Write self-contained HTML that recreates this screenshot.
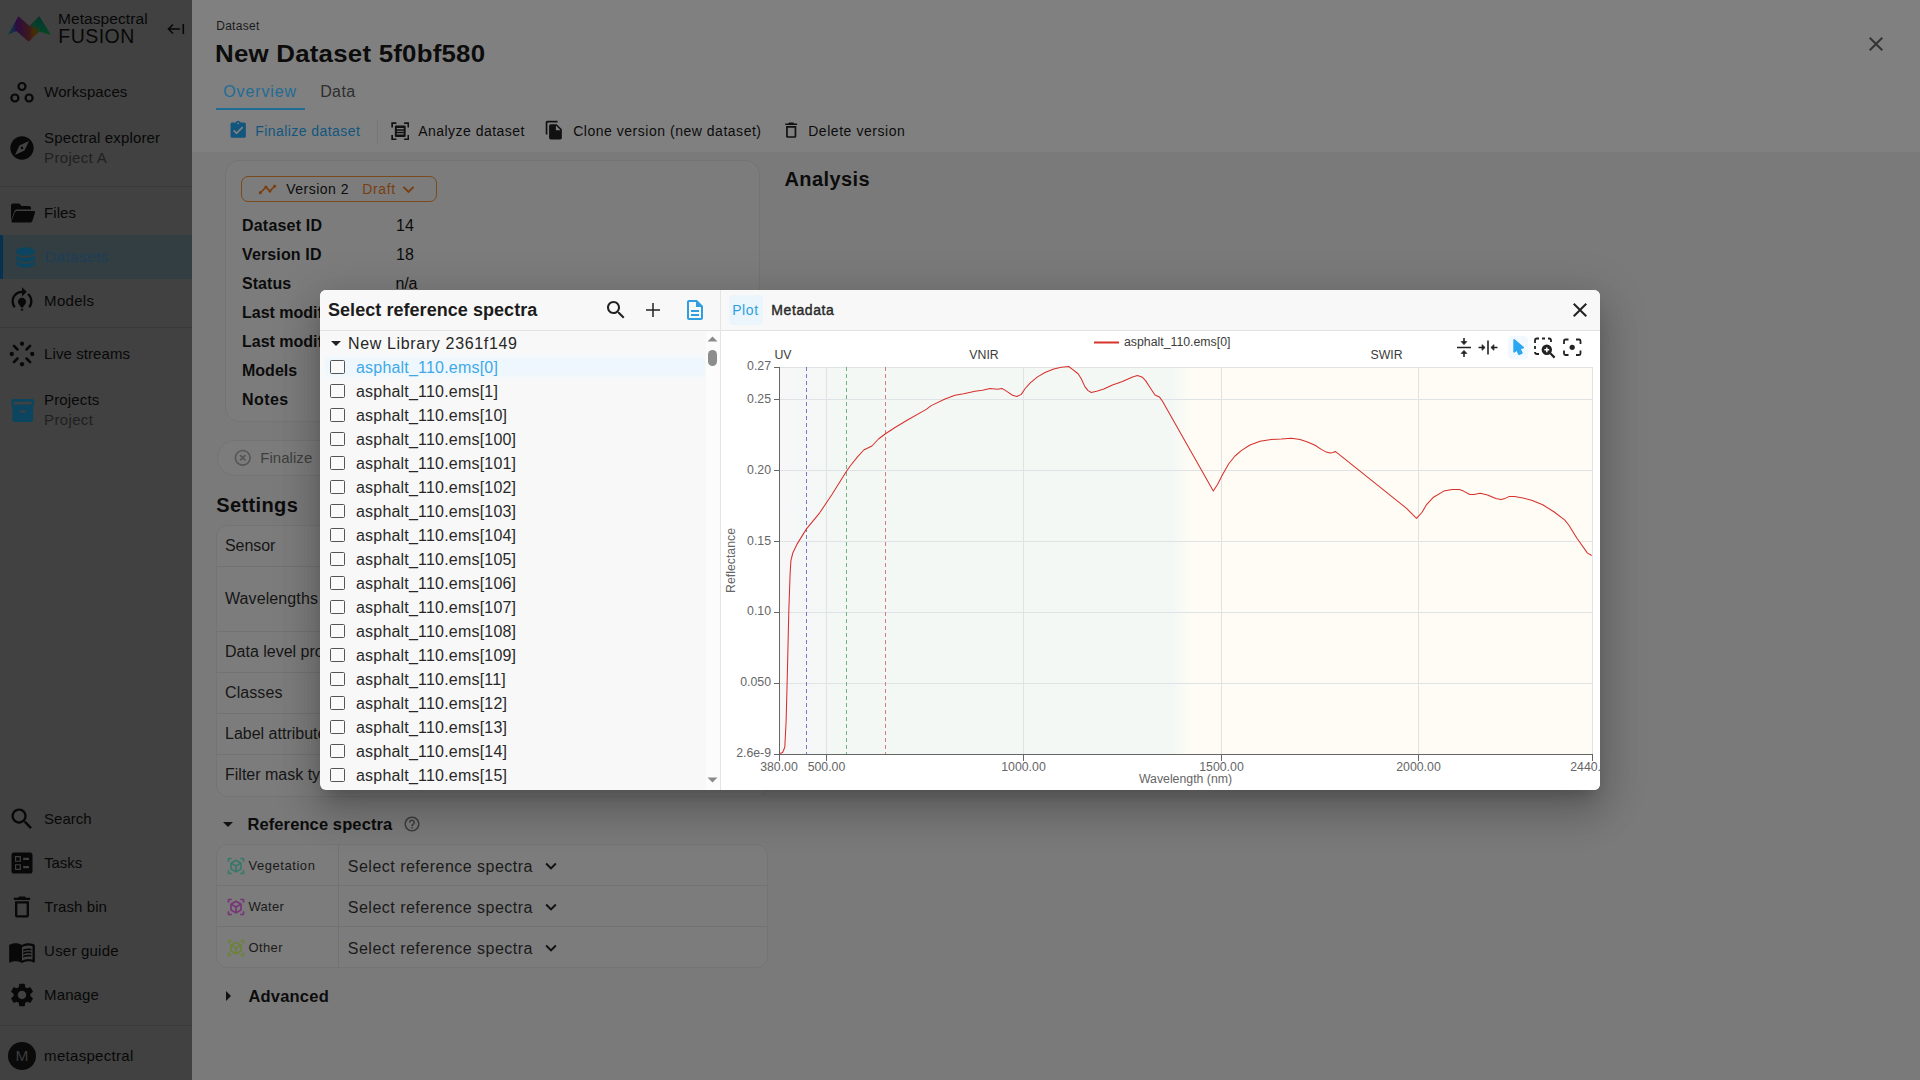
<!DOCTYPE html>
<html lang="en">
<head>
<meta charset="utf-8">
<title>Metaspectral Fusion - Dataset</title>
<style>
*{box-sizing:border-box;margin:0;padding:0}
html,body{width:1920px;height:1080px;overflow:hidden}
body{font-family:"Liberation Sans",sans-serif;background:#7a7a7a;color:#111;position:relative}
.abs{position:absolute}
svg{display:block}
.t{position:absolute;white-space:nowrap;line-height:1}
/* ---------- sidebar ---------- */
#side{position:absolute;left:0;top:0;width:192px;height:1080px;background:#414141}
#side .t{color:#080808;font-size:15px;letter-spacing:.35px}
#side .sub{color:#202020}
#side .hr{position:absolute;left:0;width:192px;height:1px;background:#393939}
#side svg{position:absolute}
/* ---------- main ---------- */
#hdr{position:absolute;left:192px;top:0;width:1728px;height:152px;background:#808080}
#main .t{color:#0c0c0c}
.card{position:absolute;background:#7c7c7c;border:1px solid #747474;border-radius:14px}
.row{position:absolute;left:0;width:100%;border-top:1px solid #757575}

/* ---------- modal ---------- */
#modal{position:absolute;left:320px;top:290px;width:1280px;height:500px;background:#f8f8f8;border-radius:6px;overflow:hidden;box-shadow:0 11px 15px -7px rgba(0,0,0,.2),0 24px 38px 3px rgba(0,0,0,.14),0 9px 46px 8px rgba(0,0,0,.12)}
#mhead{position:absolute;left:0;top:0;width:1280px;height:41px;background:#f8f8f8;border-bottom:1px solid #e2e2e2}
.li{position:absolute;left:5px;width:380px;height:24px}
.li.sel{background:linear-gradient(#f6f9fb,#eef7fd 22%,#eef7fd 78%,#f6f9fb)}
.li .cb{position:absolute;left:5.2px;top:5px;width:14.6px;height:14.2px;border:1.3px solid #555;border-radius:1.5px;background:#fafafa}
.li .lt{position:absolute;left:31px;top:5px;font-size:16px;line-height:1;letter-spacing:.2px;color:#282828;white-space:nowrap}
.li.sel .lt{color:#3fa9e6}
</style>
</head>
<body>

<!-- ================= SIDEBAR ================= -->
<div id="side">
  <!-- logo -->
  <svg style="left:4px;top:10px" width="52" height="36" viewBox="4 10 52 36">
    <defs>
      <linearGradient id="lg1" gradientUnits="userSpaceOnUse" x1="8" y1="0" x2="50.7" y2="0">
        <stop offset="0" stop-color="#0f3a40"/><stop offset=".12" stop-color="#132c4c"/><stop offset=".2" stop-color="#2b0d42"/>
        <stop offset=".36" stop-color="#35122e"/><stop offset=".5" stop-color="#3d1a1b"/><stop offset=".6" stop-color="#4b2a07"/>
        <stop offset=".68" stop-color="#34340a"/><stop offset=".78" stop-color="#0a4422"/><stop offset=".9" stop-color="#0a4a18"/><stop offset="1" stop-color="#0c4214"/>
      </linearGradient>
      <linearGradient id="lg2" gradientUnits="userSpaceOnUse" x1="39" y1="17" x2="34" y2="32">
        <stop offset="0" stop-color="#05352c"/><stop offset=".55" stop-color="#04402e" stop-opacity=".95"/><stop offset="1" stop-color="#04402e" stop-opacity="0"/>
      </linearGradient>
    </defs>
    <polygon points="8,34.700 18.300,16.200 29.700,26 39.300,16.200 50.700,34.700 39.300,31.500 28.700,41.700 16.300,31" fill="url(#lg1)"/>
    <polygon points="29.700,26 39.300,16.200 50.700,34.700 39.300,31.500" fill="url(#lg2)"/>
  </svg>
  <div class="t" style="left:58px;top:10.8px;font-size:15.5px;letter-spacing:.08px">Metaspectral</div>
  <div class="t" style="left:58.3px;top:27.2px;font-size:19.5px;letter-spacing:.45px">FUSION</div>
  <!-- collapse icon -->
  <svg style="left:167px;top:22px" width="18" height="14" viewBox="0 0 18 14" fill="none" stroke="#080808" stroke-width="1.6">
    <path d="M1.5 7H13M6 2.5L1.5 7 6 11.5M16.3 2v10"/>
  </svg>

  <!-- Workspaces -->
  <svg style="left:9px;top:80px" width="26" height="26" viewBox="0 0 26 26" fill="none" stroke="#080808" stroke-width="2.200">
    <circle cx="13" cy="6.500" r="3.500"/><circle cx="5.900" cy="18" r="3.500"/><circle cx="20.100" cy="18" r="3.500"/>
  </svg>
  <div class="t" style="left:44.2px;top:84px;letter-spacing:0.1px">Workspaces</div>

  <!-- Spectral explorer -->
  <svg style="left:8px;top:134px" width="28" height="28" viewBox="0 0 24 24" fill="#080808">
    <path d="M12 10.9c-.61 0-1.1.49-1.1 1.1s.49 1.1 1.1 1.1c.61 0 1.1-.49 1.1-1.1s-.49-1.1-1.1-1.1zM12 2C6.48 2 2 6.48 2 12s4.480 10 10 10 10-4.480 10-10S17.520 2 12 2zm2.190 12.190L6 18l3.810-8.190L18 6l-3.810 8.190z"/>
  </svg>
  <div class="t" style="left:44.1px;top:130px;letter-spacing:0.16px">Spectral explorer</div>
  <div class="t sub" style="left:44.1px;top:150px;letter-spacing:0.32px">Project A</div>
  <div class="hr" style="top:186px"></div>

  <!-- Files -->
  <svg style="left:9px;top:201px" width="27" height="24" viewBox="0 0 27 24" fill="#080808">
    <path d="M2 4.500C2 3.400 2.900 2.500 4 2.500h6.200l2.400 2.500H20c1.100 0 2 .900 2 2V8.500H7.600c-1 0-1.800.600-2.100 1.500L2 19.500z"/>
    <path d="M7.800 10h17.200c.700 0 1.200.700 1 1.400l-2.700 8.600c-.300.900-1.100 1.500-2 1.500H3.500c-.7 0-1.200-.7-1-1.400l3.300-8.700c.3-.8 1.100-1.400 2-1.400z"/>
  </svg>
  <div class="t" style="left:44.1px;top:204.7px;letter-spacing:0.04px">Files</div>

  <!-- Datasets (active) -->
  <div class="abs" style="left:0;top:235px;width:192px;height:44px;background:#323e41"></div>
  <div class="abs" style="left:0;top:235px;width:3px;height:44px;background:#063251"></div>
  <svg style="left:12px;top:244.500px" width="27" height="25" viewBox="0 0 24 24" preserveAspectRatio="none" fill="#0b4560">
    <ellipse cx="12" cy="6.200" rx="8.500" ry="4"/>
    <path d="M3.500 9.400c1.300 2 4.600 3.100 8.500 3.100s7.200-1.100 8.500-3.100v2.800c0 2.200-3.800 4-8.500 4s-8.500-1.800-8.500-4z"/>
    <path d="M3.500 15c1.300 2 4.600 3.100 8.500 3.100s7.200-1.100 8.500-3.100v2.800c0 2.200-3.800 4-8.500 4s-8.500-1.800-8.500-4z"/>
  </svg>
  <div class="t" style="left:45px;top:249px;color:#1b3e5a;letter-spacing:0.56px">Datasets</div>

  <!-- Models -->
  <svg style="left:8px;top:286px" width="28" height="28" viewBox="0 0 24 24" fill="#080808">
    <path d="M15.500 13.500c0 2-2.500 3.500-2.500 5h-2c0-1.500-2.500-3-2.500-5 0-1.930 1.570-3.500 3.500-3.500s3.500 1.570 3.500 3.500zm-2.500 6h-2V21h2v-1.500zm6-6.500c0 1.680-.590 3.210-1.580 4.420l1.420 1.420C20.180 17.270 21 15.230 21 13c0-2.740-1.230-5.190-3.160-6.840l-1.420 1.420C17.990 8.860 19 10.820 19 13zm-3-8l-4-4v3c-4.970 0-9 4.030-9 9 0 2.230.820 4.270 2.160 5.840l1.420-1.420C5.590 16.210 5 14.680 5 13c0-3.860 3.140-7 7-7v3l4-4z"/>
  </svg>
  <div class="t" style="left:44.1px;top:293px;letter-spacing:0.3px">Models</div>
  <div class="hr" style="top:327px"></div>

  <!-- Live streams -->
  <svg style="left:8px;top:340px" width="28" height="28" viewBox="0 0 26 26" fill="#080808" stroke="#080808" stroke-width="2.400" stroke-linecap="round">
    <circle cx="13" cy="3.500" r="2" stroke="none"/><circle cx="13" cy="22.500" r="2" stroke="none"/>
    <circle cx="3.500" cy="13" r="2" stroke="none"/><circle cx="22.500" cy="13" r="2" stroke="none"/>
    <path d="M5.500 5.500l3.300 3.300M20.500 5.500l-3.300 3.300M5.500 20.500l3.300-3.300M20.500 20.500l-3.300-3.300"/>
  </svg>
  <div class="t" style="left:44.1px;top:346px;letter-spacing:0.08px">Live streams</div>

  <!-- Projects -->
  <svg style="left:9.500px;top:396.500px" width="25.500" height="27" viewBox="0 0 24 26" fill="#0b4560">
    <path d="M3 2h18c1.100 0 2 .900 2 2v3.500c0 .700-.400 1.300-1 1.700V22c0 1.100-.900 2-2 2H4c-1.100 0-2-.900-2-2V9.200c-.600-.400-1-1-1-1.700V4c0-1.100.900-2 2-2zm.500 2.500v2.700h17V4.500zM9 13v2h6v-2z"/>
  </svg>
  <div class="t" style="left:44.1px;top:392px;letter-spacing:0.14px">Projects</div>
  <div class="t sub" style="left:44.1px;top:412px;letter-spacing:0.35px">Project</div>

  <!-- Search -->
  <svg style="left:8px;top:805px" width="28" height="28" viewBox="0 0 24 24" fill="#080808">
    <path d="M15.500 14h-.790l-.280-.270C15.410 12.590 16 11.110 16 9.500 16 5.910 13.090 3 9.500 3S3 5.910 3 9.500 5.910 16 9.500 16c1.610 0 3.090-.590 4.230-1.570l.270.280v.790l5 4.990L20.490 19l-4.990-5zm-6 0C7.010 14 5 11.990 5 9.500S7.010 5 9.500 5 14 7.010 14 9.500 11.990 14 9.500 14z"/>
  </svg>
  <div class="t" style="left:44.1px;top:811px;letter-spacing:0px">Search</div>

  <!-- Tasks -->
  <svg style="left:8px;top:849px" width="28" height="28" viewBox="0 0 24 24" fill="#080808">
    <path fill-rule="evenodd" d="M13 9.500h5v-2h-5v2zm0 7h5v-2h-5v2zm6 4.500H5c-1.100 0-2-.900-2-2V5c0-1.100.900-2 2-2h14c1.100 0 2 .900 2 2v14c0 1.100-.900 2-2 2zM6 11h5V6H6v5zm1-4h3v3H7V7zM6 18h5v-5H6v5zm1-4h3v3H7v-3z"/>
  </svg>
  <div class="t" style="left:44.2px;top:855px;letter-spacing:-0.09px">Tasks</div>

  <!-- Trash bin -->
  <svg style="left:8px;top:893px" width="28" height="28" viewBox="0 0 24 24" fill="#080808">
    <path d="M6 19c0 1.100.900 2 2 2h8c1.100 0 2-.900 2-2V7H6v12zM8 9h8v10H8V9zm7.500-5l-1-1h-5l-1 1H5v2h14V4z"/>
  </svg>
  <div class="t" style="left:44.2px;top:899px;letter-spacing:0.1px">Trash bin</div>

  <!-- User guide -->
  <svg style="left:8px;top:938px" width="28" height="28" viewBox="0 0 24 24" fill="#080808">
    <path d="M21 5c-1.110-.350-2.330-.500-3.500-.500-1.950 0-4.050.400-5.500 1.500-1.450-1.100-3.550-1.500-5.500-1.500S2.450 4.900 1 6v14.650c0 .250.250.500.500.500.100 0 .150-.050.250-.050C3.100 20.450 5.050 20 6.500 20c1.950 0 4.050.400 5.500 1.500 1.350-.850 3.800-1.500 5.500-1.500 1.650 0 3.350.300 4.750 1.050.100.050.150.050.250.050.250 0 .500-.250.500-.500V6c-.600-.450-1.250-.750-2-1zm0 13.500c-1.100-.350-2.300-.500-3.500-.500-1.700 0-4.150.650-5.500 1.500V8c1.350-.850 3.800-1.500 5.500-1.500 1.200 0 2.400.150 3.500.500v11.500z"/>
    <path d="M17.500 10.500c.880 0 1.730.090 2.500.260V9.240c-.790-.150-1.640-.240-2.500-.240-1.700 0-3.240.290-4.500.830v1.660c1.130-.640 2.700-.990 4.500-.990zM13 12.490v1.660c1.130-.640 2.700-.990 4.500-.990.880 0 1.730.090 2.500.260V11.900c-.790-.150-1.640-.240-2.500-.240-1.700 0-3.240.300-4.500.830zm4.500 1.840c-1.700 0-3.240.290-4.500.830v1.660c1.130-.640 2.700-.990 4.500-.990.880 0 1.730.090 2.500.260v-1.520c-.790-.160-1.640-.240-2.500-.240z"/>
  </svg>
  <div class="t" style="left:44.1px;top:943px;letter-spacing:0.21px">User guide</div>

  <!-- Manage -->
  <svg style="left:8px;top:981px" width="28" height="28" viewBox="0 0 24 24" fill="#080808">
    <path d="M19.140 12.940c.040-.300.060-.610.060-.940 0-.320-.020-.640-.070-.940l2.030-1.580c.180-.140.230-.410.120-.610l-1.920-3.320c-.120-.220-.370-.290-.590-.220l-2.390.960c-.500-.380-1.030-.700-1.620-.940l-.360-2.540c-.040-.240-.240-.410-.480-.410h-3.840c-.240 0-.430.170-.470.410l-.360 2.540c-.590.240-1.130.570-1.620.940l-2.390-.960c-.220-.080-.470 0-.590.220L2.740 8.870c-.120.210-.080.470.120.610l2.030 1.580c-.050.300-.090.630-.090.940s.020.640.070.940l-2.030 1.580c-.180.140-.230.410-.120.610l1.920 3.320c.120.220.370.290.590.220l2.390-.960c.500.380 1.030.700 1.620.940l.360 2.540c.050.240.240.410.480.410h3.840c.240 0 .440-.170.470-.410l.360-2.540c.590-.240 1.130-.560 1.620-.940l2.390.960c.220.080.470 0 .590-.220l1.920-3.320c.120-.220.070-.470-.120-.610l-2.010-1.580zM12 15.600c-1.980 0-3.600-1.620-3.600-3.600s1.620-3.600 3.600-3.600 3.600 1.620 3.600 3.600-1.620 3.600-3.600 3.600z"/>
  </svg>
  <div class="t" style="left:44.1px;top:987px;letter-spacing:0.1px">Manage</div>
  <div class="hr" style="top:1025px"></div>

  <!-- user -->
  <div class="abs" style="left:8px;top:1042px;width:28px;height:28px;border-radius:14px;background:#0a0a0a"></div>
  <div class="t" style="left:15.500px;top:1048px;color:#3c3c3c;font-size:15.500px;letter-spacing:0">M</div>
  <div class="t" style="left:44.1px;top:1048px;letter-spacing:0.3px">metaspectral</div>
</div>

<!-- ================= MAIN (dimmed) ================= -->
<div id="main">
  <div id="hdr"></div>
  <div class="t" style="left:216.2px;top:20px;font-size:12px;letter-spacing:0.28px;color:#1a1a1a">Dataset</div>
  <div class="t" style="left:215.300px;top:42px;font-size:24px;font-weight:700;letter-spacing:.2px;transform-origin:0 0;transform:scaleX(1.078)">New Dataset 5f0bf580</div>
  <!-- close -->
  <svg class="abs" style="left:1864px;top:32px" width="24" height="24" viewBox="0 0 24 24" fill="#333">
    <path d="M19 6.410L17.590 5 12 10.590 6.410 5 5 6.410 10.590 12 5 17.590 6.410 19 12 13.410 17.590 19 19 17.590 13.410 12z"/>
  </svg>
  <!-- tabs -->
  <div class="t" style="left:223.2px;top:83.5px;font-size:16px;letter-spacing:0.88px;color:#1f6c96">Overview</div>
  <div class="t" style="left:320.2px;top:83.5px;font-size:16px;letter-spacing:0.38px;color:#2e2e2e">Data</div>
  <div class="abs" style="left:216px;top:108px;width:89px;height:2px;background:#1f6c96"></div>

  <!-- toolbar -->
  <svg class="abs" style="left:227.800px;top:120.300px" width="20.400" height="20.400" viewBox="0 0 24 24" fill="#12567e">
    <path d="M19 3h-4.180C14.400 1.840 13.300 1 12 1c-1.300 0-2.400.840-2.820 2H5c-1.100 0-2 .900-2 2v14c0 1.100.900 2 2 2h14c1.100 0 2-.900 2-2V5c0-1.100-.900-2-2-2zm-7 0c.550 0 1 .450 1 1s-.450 1-1 1-1-.450-1-1 .450-1 1-1zm-2 14l-4-4 1.410-1.410L10 14.170l6.590-6.590L18 9l-8 8z"/>
  </svg>
  <div class="t" style="left:255.2px;top:123.5px;font-size:14px;letter-spacing:0.44px;color:#12567e">Finalize dataset</div>
  <div class="abs" style="left:377px;top:120px;width:1px;height:24px;background:#777"></div>
  <svg class="abs" style="left:390.500px;top:121.500px" width="18.500" height="18.500" viewBox="0 0 24 24" fill="none" stroke="#111" stroke-width="2.200">
    <path d="M1.500 7V1.500H7M17 1.500h5.500V7M22.500 17v5.500H17M7 22.500H1.500V17"/>
    <rect x="5" y="4.500" width="14" height="15" rx="1.500" fill="#111" stroke="none"/>
    <path d="M7.500 8.500h9M7.500 12h9M7.500 15.500h9" stroke="#808080" stroke-width="1.500"/>
  </svg>
  <div class="t" style="left:418.2px;top:123.5px;font-size:14px;letter-spacing:0.47px">Analyze dataset</div>
  <svg class="abs" style="left:544.300px;top:120.300px" width="20.400" height="20.400" viewBox="0 0 24 24" fill="#111">
    <path d="M16 1H4c-1.100 0-2 .900-2 2v14h2V3h12V1zm-1 4l6 6v10c0 1.100-.900 2-2 2H7.990C6.890 23 6 22.100 6 21l.010-14c0-1.100.890-2 1.990-2h7zm-1 7h5.500L14 6.500V12z"/>
  </svg>
  <div class="t" style="left:573.2px;top:123.5px;font-size:14px;letter-spacing:0.52px">Clone version (new dataset)</div>
  <svg class="abs" style="left:781.300px;top:120.300px" width="20.400" height="20.400" viewBox="0 0 24 24" fill="#111">
    <path d="M6 19c0 1.100.900 2 2 2h8c1.100 0 2-.900 2-2V7H6v12zM8 9h8v10H8V9zm7.500-5l-1-1h-5l-1 1H5v2h14V4z"/>
  </svg>
  <div class="t" style="left:808.2px;top:123.5px;font-size:14px;letter-spacing:0.55px">Delete version</div>

  <!-- info card -->
  <div class="card" style="left:225px;top:160px;width:535px;height:262px"></div>
  <div class="abs" style="left:241px;top:176px;width:196px;height:26px;border:1px solid #7a4a1c;border-radius:7px"></div>
  <svg class="abs" style="left:258px;top:180px" width="19" height="19" viewBox="0 0 24 24" fill="#7a3f10">
    <path d="M23 8c0 1.100-.900 2-2 2-.180 0-.350-.020-.510-.070l-3.560 3.550c.050.160.070.340.070.520 0 1.100-.900 2-2 2s-2-.900-2-2c0-.180.020-.360.070-.520l-2.550-2.550c-.160.050-.340.070-.520.070s-.360-.020-.520-.070l-4.550 4.560c.050.160.070.330.070.510 0 1.100-.900 2-2 2s-2-.900-2-2 .900-2 2-2c.180 0 .350.020.510.070l4.560-4.550C8.020 9.360 8 9.180 8 9c0-1.100.900-2 2-2s2 .900 2 2c0 .180-.020.360-.070.520l2.550 2.550c.160-.050.340-.070.520-.070s.360.020.520.070l3.550-3.560C19.020 8.350 19 8.180 19 8c0-1.100.900-2 2-2s2 .900 2 2z"/>
  </svg>
  <div class="t" style="left:286.2px;top:181.5px;font-size:14px;letter-spacing:0.5px">Version 2</div>
  <div class="t" style="left:362.2px;top:181.5px;font-size:14px;letter-spacing:0.64px;color:#7a3f10">Draft</div>
  <svg class="abs" style="left:396.500px;top:177.500px" width="23" height="23" viewBox="0 0 24 24" fill="#7a3f10">
    <path d="M16.590 8.590L12 13.170 7.410 8.590 6 10l6 6 6-6z"/>
  </svg>

  <div class="t" style="left:242px;top:218px;font-size:16px;font-weight:700;letter-spacing:0.2px">Dataset ID</div>
  <div class="t" style="left:396px;top:218px;font-size:16px">14</div>
  <div class="t" style="left:242px;top:247px;font-size:16px;font-weight:700;letter-spacing:0.14px">Version ID</div>
  <div class="t" style="left:396px;top:247px;font-size:16px">18</div>
  <div class="t" style="left:242px;top:276px;font-size:16px;font-weight:700;letter-spacing:0.05px">Status</div>
  <div class="t" style="left:395.500px;top:276px;font-size:16px;letter-spacing:-.2px">n/a</div>
  <div class="t" style="left:242px;top:305px;font-size:16px;font-weight:700">Last modified</div>
  <div class="t" style="left:242px;top:334px;font-size:16px;font-weight:700">Last modified by</div>
  <div class="t" style="left:242px;top:363px;font-size:16px;font-weight:700">Models</div>
  <div class="t" style="left:242px;top:392px;font-size:16px;font-weight:700;letter-spacing:0.44px">Notes</div>

  <div class="t" style="left:784.5px;top:169px;font-size:20px;font-weight:700;letter-spacing:0.41px">Analysis</div>

  <!-- finalize pill -->
  <div class="abs" style="left:217px;top:440px;width:220px;height:36px;border:1px solid #747474;border-radius:18px;background:#7c7c7c"></div>
  <svg class="abs" style="left:233.300px;top:448.300px" width="19.500" height="19.500" viewBox="0 0 24 24" fill="#565656">
    <path d="M14.590 8L12 10.590 9.410 8 8 9.410 10.590 12 8 14.590 9.410 16 12 13.410 14.590 16 16 14.590 13.410 12 16 9.410 14.590 8zM12 2C6.470 2 2 6.470 2 12s4.470 10 10 10 10-4.470 10-10S17.530 2 12 2zm0 18c-4.410 0-8-3.590-8-8s3.590-8 8-8 8 3.590 8 8-3.590 8-8 8z"/>
  </svg>
  <div class="t" style="left:260.2px;top:450px;font-size:15px;letter-spacing:0.05px;color:#3e3e3e">Finalize</div>

  <div class="t" style="left:216.2px;top:495px;font-size:20px;font-weight:700;letter-spacing:0.39px">Settings</div>
  <!-- settings table -->
  <div class="card" style="left:216px;top:525px;width:552px;height:272px;border-radius:12px"></div>
  <div class="abs" style="left:217px;top:566px;width:550px;height:1px;background:#727272"></div>
  <div class="abs" style="left:217px;top:631px;width:550px;height:1px;background:#727272"></div>
  <div class="abs" style="left:217px;top:672px;width:550px;height:1px;background:#727272"></div>
  <div class="abs" style="left:217px;top:713px;width:550px;height:1px;background:#727272"></div>
  <div class="abs" style="left:217px;top:754px;width:550px;height:1px;background:#727272"></div>
  <div class="t" style="left:225px;top:538px;font-size:16px;color:#161616;letter-spacing:-0.05px">Sensor</div>
  <div class="t" style="left:225px;top:591px;font-size:16px;color:#161616;letter-spacing:0.1px">Wavelengths</div>
  <div class="t" style="left:225px;top:643.5px;font-size:16px;color:#161616">Data level processing</div>
  <div class="t" style="left:225px;top:685px;font-size:16px;color:#161616;letter-spacing:0.08px">Classes</div>
  <div class="t" style="left:225px;top:726px;font-size:16px;color:#161616">Label attribute</div>
  <div class="t" style="left:225px;top:767px;font-size:16px;color:#161616">Filter mask type</div>

  <!-- reference spectra -->
  <svg class="abs" style="left:216px;top:812px" width="24" height="24" viewBox="0 0 24 24" fill="#111"><path d="M7 10l5 5 5-5z"/></svg>
  <div class="t" style="left:247.4px;top:815.5px;font-size:16.500px;font-weight:700;letter-spacing:0.11px">Reference spectra</div>
  <svg class="abs" style="left:403px;top:815px" width="18" height="18" viewBox="0 0 24 24" fill="#3c3c3c">
    <path d="M11 18h2v-2h-2v2zm1-16C6.480 2 2 6.480 2 12s4.480 10 10 10 10-4.480 10-10S17.520 2 12 2zm0 18c-4.410 0-8-3.590-8-8s3.590-8 8-8 8 3.590 8 8-3.590 8-8 8zm0-14c-2.210 0-4 1.790-4 4h2c0-1.100.900-2 2-2s2 .900 2 2c0 2-3 1.750-3 5h2c0-2.250 3-2.500 3-5 0-2.210-1.790-4-4-4z"/>
  </svg>
  <div class="card" style="left:216px;top:844px;width:552px;height:124px;border-radius:12px"></div>
  <div class="abs" style="left:217px;top:885px;width:550px;height:1px;background:#727272"></div>
  <div class="abs" style="left:217px;top:926px;width:550px;height:1px;background:#727272"></div>
  <div class="abs" style="left:338px;top:845px;width:1px;height:122px;background:#727272"></div>
  <svg width="0" height="0" style="position:absolute"><defs>
    <path id="ar" d="M18.250 7.600l-5.500-3.180c-.460-.270-1.040-.270-1.500 0L5.750 7.600c-.460.270-.750.760-.750 1.300v6.350c0 .540.290 1.030.750 1.300l5.500 3.180c.460.270 1.040.270 1.500 0l5.500-3.180c.460-.270.750-.760.750-1.300V8.900c0-.540-.290-1.030-.750-1.300zM7 14.960v-4.620l4 2.320v4.610l-4-2.310zm5-4.030L8 8.610l4-2.310 4 2.310-4 2.320zm1 6.340v-4.610l4-2.320v4.620l-4 2.310zM7 2H3.500C2.670 2 2 2.670 2 3.500V7h2V4h3V2zm10 0h3.500c.830 0 1.500.670 1.500 1.500V7h-2V4h-3V2zM7 22H3.500c-.830 0-1.500-.670-1.500-1.500V17h2v3h3v2zm10 0h3.500c.830 0 1.500-.670 1.500-1.500V17h-2v3h-3v2z"/>
  </defs></svg>
  <svg class="abs" style="left:226px;top:855.700px" width="20" height="20" viewBox="0 0 24 24" fill="#38786a"><use href="#ar"/></svg>
  <svg class="abs" style="left:226px;top:896.700px" width="20" height="20" viewBox="0 0 24 24" fill="#783478"><use href="#ar"/></svg>
  <svg class="abs" style="left:226px;top:937.700px" width="20" height="20" viewBox="0 0 24 24" fill="#6c8238"><use href="#ar"/></svg>
  <div class="t" style="left:248.4px;top:859px;font-size:13px;letter-spacing:0.56px;color:#1a1a1a">Vegetation</div>
  <div class="t" style="left:248.4px;top:900px;font-size:13px;letter-spacing:0.3px;color:#1a1a1a">Water</div>
  <div class="t" style="left:248.4px;top:941px;font-size:13px;letter-spacing:0.4px;color:#1a1a1a">Other</div>
  <div class="t" style="left:347.8px;top:859px;font-size:16px;letter-spacing:0.49px;color:#1a1a1a">Select reference spectra</div>
  <div class="t" style="left:347.8px;top:900px;font-size:16px;letter-spacing:0.49px;color:#1a1a1a">Select reference spectra</div>
  <div class="t" style="left:347.8px;top:941px;font-size:16px;letter-spacing:0.49px;color:#1a1a1a">Select reference spectra</div>
  <svg class="abs" style="left:540px;top:854.7px" width="22" height="22" viewBox="0 0 24 24" fill="#111"><path d="M16.590 8.590L12 13.170 7.410 8.590 6 10l6 6 6-6z"/></svg>
  <svg class="abs" style="left:540px;top:895.7px" width="22" height="22" viewBox="0 0 24 24" fill="#111"><path d="M16.590 8.590L12 13.170 7.410 8.590 6 10l6 6 6-6z"/></svg>
  <svg class="abs" style="left:540px;top:936.7px" width="22" height="22" viewBox="0 0 24 24" fill="#111"><path d="M16.590 8.590L12 13.170 7.410 8.590 6 10l6 6 6-6z"/></svg>

  <svg class="abs" style="left:216px;top:984px" width="24" height="24" viewBox="0 0 24 24" fill="#111"><path d="M10 17l5-5-5-5v10z"/></svg>
  <div class="t" style="left:248.4px;top:988px;font-size:16.500px;font-weight:700;letter-spacing:0.21px">Advanced</div>
</div>

<!-- ================= MODAL ================= -->
<div id="modal">
  <div id="mhead"></div>
  <div class="abs" style="left:400px;top:0;width:1px;height:500px;background:#e4e4e4"></div>
  <div class="t" style="left:8px;top:11px;font-size:18px;font-weight:700;letter-spacing:.05px;color:#1c1c1c">Select reference spectra</div>
  <svg class="abs" style="left:284px;top:8px" width="24" height="24" viewBox="0 0 24 24" fill="#222">
    <path d="M15.500 14h-.790l-.280-.270C15.410 12.590 16 11.110 16 9.500 16 5.910 13.090 3 9.500 3S3 5.910 3 9.500 5.910 16 9.500 16c1.610 0 3.090-.590 4.230-1.570l.270.280v.790l5 4.990L20.490 19l-4.990-5zm-6 0C7.010 14 5 11.990 5 9.500S7.010 5 9.500 5 14 7.010 14 9.500 11.990 14 9.500 14z"/>
  </svg>
  <svg class="abs" style="left:321px;top:8px" width="24" height="24" viewBox="0 0 24 24" fill="#222">
    <path d="M19 12.750h-6.250V19h-1.500v-6.250H5v-1.500h6.250V5h1.500v6.250H19v1.500z"/>
  </svg>
  <svg class="abs" style="left:363px;top:8px" width="24" height="24" viewBox="0 0 24 24" fill="#2f9fe0">
    <path d="M8 16h8v2H8zm0-4h8v2H8zm6-10H6c-1.100 0-2 .900-2 2v16c0 1.100.890 2 1.990 2H18c1.100 0 2-.900 2-2V8l-6-6zm4 18H6V4h7v5h5v11z"/>
  </svg>
  <div class="abs" style="left:409px;top:5px;width:34px;height:30px;border-radius:4px;background:#ebf5fc"></div>
  <div class="t" style="left:412.2px;top:13px;font-size:14px;letter-spacing:0.57px;color:#2f9fe0">Plot</div>
  <div class="t" style="left:451.200px;top:13px;font-size:14px;letter-spacing:.62px;color:#2a2a2a;-webkit-text-stroke:.42px #2a2a2a">Metadata</div>
  <svg class="abs" style="left:1248px;top:8px" width="24" height="24" viewBox="0 0 24 24" fill="#222">
    <path d="M19 6.410L17.590 5 12 10.590 6.410 5 5 6.410 10.590 12 5 17.590 6.410 19 12 13.410 17.590 19 19 17.590 13.410 12z"/>
  </svg>

  <!-- list -->
  <svg class="abs" style="left:4px;top:41px" width="24" height="24" viewBox="0 0 24 24" fill="#222"><path d="M7 10l5 5 5-5z"/></svg>
  <div class="t" style="left:28px;top:46px;font-size:16px;letter-spacing:0.65px;color:#262626">New Library 2361f149</div>
  <div class="li sel" style="top:65px"><span class="cb"></span><span class="lt">asphalt_110.ems[0]</span></div>
  <div class="li" style="top:89px"><span class="cb"></span><span class="lt">asphalt_110.ems[1]</span></div>
  <div class="li" style="top:113px"><span class="cb"></span><span class="lt">asphalt_110.ems[10]</span></div>
  <div class="li" style="top:137px"><span class="cb"></span><span class="lt">asphalt_110.ems[100]</span></div>
  <div class="li" style="top:161px"><span class="cb"></span><span class="lt">asphalt_110.ems[101]</span></div>
  <div class="li" style="top:185px"><span class="cb"></span><span class="lt">asphalt_110.ems[102]</span></div>
  <div class="li" style="top:209px"><span class="cb"></span><span class="lt">asphalt_110.ems[103]</span></div>
  <div class="li" style="top:233px"><span class="cb"></span><span class="lt">asphalt_110.ems[104]</span></div>
  <div class="li" style="top:257px"><span class="cb"></span><span class="lt">asphalt_110.ems[105]</span></div>
  <div class="li" style="top:281px"><span class="cb"></span><span class="lt">asphalt_110.ems[106]</span></div>
  <div class="li" style="top:305px"><span class="cb"></span><span class="lt">asphalt_110.ems[107]</span></div>
  <div class="li" style="top:329px"><span class="cb"></span><span class="lt">asphalt_110.ems[108]</span></div>
  <div class="li" style="top:353px"><span class="cb"></span><span class="lt">asphalt_110.ems[109]</span></div>
  <div class="li" style="top:377px"><span class="cb"></span><span class="lt">asphalt_110.ems[11]</span></div>
  <div class="li" style="top:401px"><span class="cb"></span><span class="lt">asphalt_110.ems[12]</span></div>
  <div class="li" style="top:425px"><span class="cb"></span><span class="lt">asphalt_110.ems[13]</span></div>
  <div class="li" style="top:449px"><span class="cb"></span><span class="lt">asphalt_110.ems[14]</span></div>
  <div class="li" style="top:473px"><span class="cb"></span><span class="lt">asphalt_110.ems[15]</span></div>

  <!-- scrollbar -->
  <div class="abs" style="left:385.500px;top:41px;width:14.500px;height:459px;background:#fcfcfc"></div>
  <svg class="abs" style="left:387px;top:46px" width="11" height="6" viewBox="0 0 11 6" fill="#8a8a8a"><path d="M0.500 5.500L5.500 0.500L10.500 5.500z"/></svg>
  <div class="abs" style="left:388px;top:59.5px;width:9px;height:16.5px;border-radius:4.500px;background:#8c8c8c"></div>
  <svg class="abs" style="left:387px;top:487px" width="11" height="6" viewBox="0 0 11 6" fill="#8a8a8a"><path d="M0.500 0.500L5.500 5.500L10.500 0.500z"/></svg>

  <svg class="abs" style="left:0;top:0" width="1280" height="500" viewBox="320 290 1280 500" font-family="Liberation Sans, sans-serif" font-size="12.3">
    <defs>
      <linearGradient id="bgg" gradientUnits="userSpaceOnUse" x1="779" y1="0" x2="1592" y2="0">
        <stop offset="0" stop-color="#f8f7f7"/>
        <stop offset=".012" stop-color="#f7f7f8"/>
        <stop offset=".03" stop-color="#f4f7f7"/>
        <stop offset=".06" stop-color="#f4f8f5"/>
        <stop offset=".485" stop-color="#f4f8f5"/>
        <stop offset=".505" stop-color="#fefcf5"/>
        <stop offset="1" stop-color="#fefcf5"/>
      </linearGradient>
    </defs>
    <rect x="721" y="331" width="879" height="459" fill="#fff"/>
    <rect x="779" y="367" width="814" height="387" fill="url(#bgg)"/>
    <g stroke="#e0e3e6" stroke-width="1" fill="none" shape-rendering="crispEdges">
      <path d="M779 367.5H1593M779 399.5H1593M779 470.5H1593M779 541.5H1593M779 612.5H1593M779 683.5H1593"/>
      <path d="M826.500 367V754M1023.500 367V754M1221.500 367V754M1418.500 367V754M1592.500 367V754"/>
    </g>
    <g fill="none" stroke-width=".900" stroke-dasharray="4 3">
      <path d="M806.500 367V754" stroke="#6868b8"/>
      <path d="M846.500 367V754" stroke="#68a876"/>
      <path d="M885.500 367V754" stroke="#d46c76"/>
    </g>
    <g stroke="#666" stroke-width="1" fill="none" shape-rendering="crispEdges">
      <path d="M779.500 367V754.500H1593"/>
      <path d="M774 367.500h5M774 399.500h5M774 470.500h5M774 541.500h5M774 612.500h5M774 683.500h5M774 754.500h5"/>
      <path d="M779.500 755v6M826.500 755v6M1023.500 755v6M1221.500 755v6M1418.500 755v6M1592.500 755v6"/>
    </g>
    <polyline fill="none" stroke="#d6302c" stroke-width="1.050" stroke-linejoin="round" points="780.0,753.5 782.6,752.5 784.8,747.2 786.1,721.7 787.5,668 788.8,611.6 790.1,574 790.9,560.6 792.8,553 796.9,544.4 806.5,528.9 819.7,512.8 831.8,494.8 846.5,471.25 850,466.25 857.5,456.9 863.75,450 871.9,446 878.75,438.75 885.5,433.75 895,427.5 907.5,420 926.25,409.4 931.25,405.6 945,399 955,395.25 963.75,393.75 975,391.25 982.5,390.25 990,388.5 997.5,389.25 1001.9,388.5 1003.75,389.4 1007.5,391.9 1012.5,395.25 1016.9,396.5 1021.25,394.4 1025,388.75 1030,383.1 1037.5,376.9 1045,372.5 1053.75,369 1061.25,367.25 1068.75,366.5 1072.5,369.4 1078.1,373.75 1081.25,378.75 1085,386.9 1088.1,390.6 1091.25,392.5 1097.5,390.9 1103.75,389.1 1112.5,385 1122.5,381.5 1132.5,376.9 1137.5,375.6 1141.9,376.9 1145.6,380.6 1150,387.5 1155,395 1159.4,396.9 1162.5,401.25 1213.3,491 1217.5,484.5 1222.5,474.7 1228.75,463.75 1235,456 1241.25,450.6 1250,445 1260,441.25 1271.25,439.4 1281.25,439 1291.25,438.25 1300,439.5 1307.5,441.9 1315,445.25 1321.25,449.4 1326.25,452.1 1330,453.1 1333.1,452.5 1335.25,451.5 1337.5,453.1 1406.25,508.1 1416.5,518.3 1421.9,512.5 1426.6,504.6 1433.5,497.2 1443.75,491.1 1452.1,489.4 1459.4,489.6 1463.5,491.1 1469.8,494.5 1474,494.6 1480.2,493.2 1487.5,495 1495.8,498.4 1501,499.5 1505.2,498.4 1509.4,496.4 1514.6,496.4 1522.9,497.9 1532.3,500.5 1542.7,504.7 1554.2,512 1564.6,519.8 1568.75,525 1577.1,538.5 1587.5,553.1 1591.7,555.5"/>
    <g fill="#666" text-anchor="end">
      <text x="771" y="370">0.27</text>
      <text x="771" y="402.500">0.25</text>
      <text x="771" y="474">0.20</text>
      <text x="771" y="545">0.15</text>
      <text x="771" y="615">0.10</text>
      <text x="771" y="686">0.050</text>
      <text x="771" y="756.500">2.6e-9</text>
    </g>
    <g fill="#666" text-anchor="middle">
      <text x="779" y="770.800">380.00</text>
      <text x="826.500" y="770.800">500.00</text>
      <text x="1023.500" y="770.800">1000.00</text>
      <text x="1221.500" y="770.800">1500.00</text>
      <text x="1418.500" y="770.800">2000.00</text>
      <text x="1592.500" y="770.800">2440.00</text>
      <text x="1185.500" y="782.800">Wavelength (nm)</text>
      <text transform="translate(735.300 560.500) rotate(-90)">Reflectance</text>
    </g>
    <g fill="#3c3c3c" text-anchor="middle">
      <text x="783" y="359">UV</text>
      <text x="984" y="359">VNIR</text>
      <text x="1386.500" y="359">SWIR</text>
    </g>
    <path d="M1094 342.500H1119" stroke="#d8342c" stroke-width="2" fill="none"/>
    <text x="1124" y="345.800" fill="#3c3c3c">asphalt_110.ems[0]</text>

    <!-- chart toolbar -->
    <g fill="none" stroke="#222" stroke-width="1.600">
      <path d="M1457 347.500H1471M1464 338V343M1464 357V352"/>
      <path d="M1488 340.500V354.500M1478.500 347.500H1483.500M1497.500 347.500H1492.500"/>
    </g>
    <g fill="#222" stroke="#222" stroke-width=".800" stroke-linejoin="round">
      <path d="M1461.200 341.600L1464 344.600L1466.800 341.600zM1461.200 353.400L1464 350.400L1466.800 353.400z"/>
      <path d="M1482.100 344.700L1485.100 347.500L1482.100 350.300zM1493.900 344.700L1490.900 347.500L1493.900 350.300z"/>
    </g>
    <rect x="1508" y="336" width="20" height="23.500" rx="4" fill="#f2f9fe"/>
    <path transform="translate(1508.500 337.500) scale(.8)" fill="#2aa7f0" d="M13.640,21.970C13.140,22.210 12.540,22 12.310,21.500L10.130,16.760L7.620,18.780C7.450,18.920 7.240,19 7,19A1,1 0 0,1 6,18V3A1,1 0 0,1 7,2C7.240,2 7.470,2.090 7.640,2.230L7.650,2.220L19.140,11.860C19.570,12.220 19.620,12.850 19.270,13.270C19.120,13.450 18.910,13.570 18.700,13.610L15.540,14.230L17.740,18.960C18,19.460 17.760,20.050 17.260,20.280L13.640,21.970Z"/>
    <!-- region zoom -->
    <g fill="none" stroke="#222" stroke-width="1.800">
      <path d="M1535 343V340.500Q1535 338.500 1537 338.500H1539M1542 338.500H1545M1548 338.500H1549Q1551 338.500 1551 340.500V342M1535 346V349M1535 352Q1535 354 1537 354H1539"/>
      <circle cx="1546.800" cy="349.800" r="4.400" fill="#222" stroke-width="1.600"/>
      <path d="M1550.300 353.300L1554.600 357.600" stroke-width="2.200"/>
      <path d="M1544.400 349.800h4.800M1546.800 347.400v4.800" stroke="#fff" stroke-width="1.500"/>
    </g>
    <!-- focus -->
    <g fill="none" stroke="#222" stroke-width="1.800">
      <path d="M1564 344V341Q1564 339.500 1565.500 339.500H1568.500M1576 339.500H1579Q1580.500 339.500 1580.500 341V344M1580.500 350.500V353.500Q1580.500 355 1579 355H1576M1568.500 355H1565.500Q1564 355 1564 353.500V350.500"/>
      <circle cx="1572.200" cy="347.300" r="2.600" fill="#222" stroke="none"/>
    </g>
  </svg>
</div>
</body>
</html>
